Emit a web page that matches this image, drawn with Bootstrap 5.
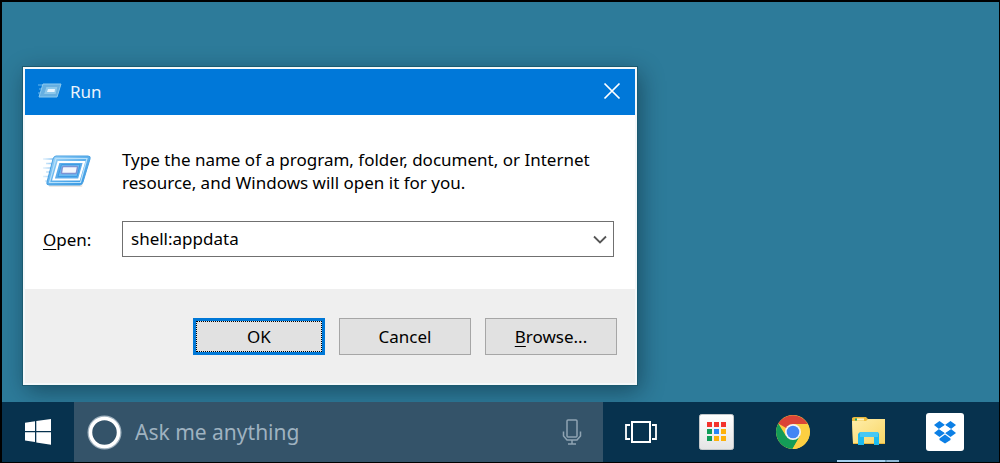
<!DOCTYPE html>
<html lang="en">
<head>
<meta charset="utf-8">
<meta name="viewport" content="width=device-width, initial-scale=1">
<title>Run</title>
<link href="https://cdn.jsdelivr.net/npm/bootstrap@5.3.0/dist/css/bootstrap.min.css" rel="stylesheet">
<style>
  body { font-family: "Noto Sans", "Open Sans", sans-serif; font-size: 17px; line-height: 23px; color: #000; background: #2d7b9a; }
  .desktop { border: 2px solid #000; border-right-width: 1px; }
  .workspace { padding: 65px 21px 17px; }
  .run-dialog { max-width: 614px; border: 2px solid #f4f8fa; background: #fff; outline: 1px solid #1b5a70; outline-offset: 0; box-shadow: 3px 6px 22px rgba(0, 20, 30, .45); }
  .title-strip { height: 46px; padding: 0 13px 2px; background: #0078d9; color: #fff; }
  .title-strip .caption { color: #eaf4fc; }
  .close-button { width: 20px; height: 20px; }
  .dialog-content { padding: 33px 21px 32px 18px; }
  .label-column { width: 79px; }
  .intro { margin-bottom: 27px; }
  .combo { height: 36px; border: 1px solid #707070; background: #fff; }
  .combo input { font-size: 17px; color: #000; padding: 0 8px 2px; outline: 0; }
  .combo button { width: 26px; }
  .dialog-actions { background: #efefef; padding: 29px 18px 28px; gap: 14px; }
  .action { width: 132px; height: 37px; border: 1px solid #a6a6a6; background: #e1e1e1; color: #000; font-size: 17px; line-height: 23px; padding: 0; }
  .action.default { border-color: #0078d7; border-width: 3px; outline: 1px dotted #000; outline-offset: -4px; }
  u { text-underline-offset: 3px; }
  .taskbar { height: 60px; background: #07324e; }
  .start-button { width: 72px; }
  .search-area { background: #345369; padding: 0 21px 0 13px; }
  .search-area input { color: #9fb2c0; font-size: 21px; line-height: 30px; padding: 0; margin-left: 13px; outline: 0; }
  .search-area input::placeholder { color: #9fb2c0; opacity: 1; }
  .task-icons { gap: 1px; padding-right: 17px; }
  .task-button { width: 75px; }
  .running::after { content: ""; position: absolute; left: 6px; right: 7px; bottom: 0; height: 2px; background: linear-gradient(90deg, #a5d0ef 78%, #6f9fbc 78%, #6f9fbc 81%, #8eb8d6 81%); }
  .plain { border: 0; padding: 0; background: transparent; }
  svg { display: block; flex: none; }
</style>
</head>
<body>
<svg width="0" height="0" class="position-absolute" aria-hidden="true">
  <defs>
    <linearGradient id="glass" x1="0" y1="0" x2="1" y2="1"><stop offset="0" stop-color="#a9dafa"/><stop offset=".5" stop-color="#5eb0ec"/><stop offset="1" stop-color="#3295e2"/></linearGradient>
    <linearGradient id="trail" gradientUnits="userSpaceOnUse" x1="0" x2="12" y1="0" y2="0"><stop offset="0" stop-color="#9fd0f5" stop-opacity=".3"/><stop offset="1" stop-color="#6db4ee"/></linearGradient>
    <linearGradient id="folder" x1="0" y1="0" x2="1" y2="1"><stop offset="0" stop-color="#ffeeaa"/><stop offset="1" stop-color="#f8d667"/></linearGradient>
    <linearGradient id="tile" x1="0" y1="0" x2="0" y2="1"><stop offset="0" stop-color="#fff"/><stop offset="1" stop-color="#e4e4e4"/></linearGradient>
  </defs>
</svg>
<div class="desktop d-flex flex-column min-vh-100">
  <main class="workspace flex-grow-1">
    <section class="run-dialog" role="dialog" aria-labelledby="run-title">
      <header class="title-strip d-flex align-items-center">
        <svg width="24" height="18" viewBox="0 0 24 18" aria-hidden="true">
          <path d="M0 3h6M1 7h5M0 11h5" stroke="#65b5ee"/>
          <path d="M5 2h18l-4 13H1z" fill="#64afe2" stroke="#8bcaf0"/>
          <path d="M8 4.500h12l-2 8H5.500z" fill="#8cc8eb" stroke="#68afe0"/>
          <path d="M10 7h7l-.5 3H9z" fill="#e8f5ff"/>
        </svg>
        <span id="run-title" class="caption ms-2">Run</span>
        <button class="plain close-button ms-auto d-flex align-items-center justify-content-center" type="button" aria-label="Close">
          <svg width="18" height="18" viewBox="0 0 18 18"><path d="M1.500 1.500l15 15M16.500 1.500l-15 15" stroke="#fff" stroke-width="1.700"/></svg>
        </button>
      </header>
      <form>
        <div class="dialog-content">
          <div class="intro d-flex">
            <div class="label-column flex-shrink-0">
              <svg width="49" height="46" viewBox="0 0 49 46" aria-hidden="true">
                <path d="M0 11h12M3 15.500h9M0 20h10M3 24h7M0 28.500h8M2 33h6" stroke="url(#trail)" stroke-width="1.500"/>
                <path d="M13 10h34l-8 29H6z" fill="#9b806a" opacity=".18"/>
                <path d="M13 8h32q3 0 2 3l-7 23q-1 3-3 3H6q-3 0-2-3l6-23q1-3 3-3z" fill="url(#glass)" stroke="#49a1e3"/>
                <path d="M13 10.500h31l-6.500 24H6.500z" fill="none" stroke="#b8e1fb" stroke-width="1.200"/>
                <path d="M15.500 14h25.500l-5 17.500H10.500z" fill="#5cacea" stroke="#fff" stroke-width="2.200"/>
                <path d="M18.500 16.500h18.500l-3 12H15z" fill="#6bb9f1" stroke="#3d9be4"/>
                <path d="M20.500 18.500h13q1.200 0 1 1l-1 5q-.3 1-1.500 1H19.500q-1.200 0-1-1l.8-5q.2-1 1.200-1z" fill="#f3f6fd" stroke="#7c93d4" stroke-width="1.500"/>
              </svg>
            </div>
            <div>Type the name of a program, folder, document, or Internet<br class="d-none d-sm-block"> resource, and Windows will open it for you.</div>
          </div>
          <div class="d-flex align-items-center">
            <label class="label-column flex-shrink-0" for="open-field"><u>O</u>pen:</label>
            <div class="combo d-flex flex-grow-1">
              <input class="border-0 flex-grow-1 bg-transparent w-100" id="open-field" type="text" value="shell:appdata">
              <button class="plain d-flex align-items-center justify-content-center flex-shrink-0" type="button" aria-label="Show recent commands">
                <svg width="14" height="9" viewBox="0 0 14 9"><path d="M1 1.500l6 6 6-6" fill="none" stroke="#555" stroke-width="1.800"/></svg>
              </button>
            </div>
          </div>
        </div>
        <div class="dialog-actions d-flex flex-wrap justify-content-end">
          <button class="btn rounded-0 action default" type="button">OK</button>
          <button class="btn rounded-0 action" type="button">Cancel</button>
          <button class="btn rounded-0 action" type="button"><u>B</u>rowse...</button>
        </div>
      </form>
    </section>
  </main>
  <footer class="taskbar d-flex">
    <button class="plain start-button d-flex align-items-center justify-content-center flex-shrink-0" type="button" aria-label="Start">
      <svg width="26" height="26" viewBox="0 0 26 26"><path fill="#fff" d="M0 3.800L10 2.300V12H0zM11.300 2.100L26 0v12H11.300zM0 13.300h10v9.600L0 21.500zM11.300 13.300H26v12.500l-14.700-2.300z"/></svg>
    </button>
    <div class="search-area d-flex align-items-center flex-grow-1">
      <svg width="35" height="35" viewBox="0 0 35 35" aria-hidden="true"><circle cx="17.500" cy="17.500" r="15.500" fill="none" stroke="#9fb1be" stroke-width="3"/><circle cx="17.500" cy="17.500" r="14" fill="none" stroke="#fff" stroke-width="3.500"/></svg>
      <input class="border-0 bg-transparent flex-grow-1 w-100" type="text" placeholder="Ask me anything" aria-label="Ask me anything">
      <button class="plain" type="button" aria-label="Voice search">
        <svg width="20" height="26" viewBox="0 0 20 26"><g fill="none" stroke="#8fa4b3" stroke-width="1.500"><rect x="5" y="1" width="10" height="17" rx="1"/><path d="M1.500 12.500V17l3.500 4h10l3.500-4v-4.500M10 21v4M6 25h8"/></g></svg>
      </button>
    </div>
    <nav class="task-icons d-flex flex-shrink-0" aria-label="Taskbar">
      <button class="plain task-button d-flex align-items-center justify-content-center" type="button" aria-label="Task View">
        <svg width="32" height="24" viewBox="0 0 32 24"><g fill="none" stroke="#fff" stroke-width="2"><rect x="7" y="2" width="18" height="20"/><path d="M5 5H1v14h4M27 5h4v14h-4" stroke-width="1.800"/></g></svg>
      </button>
      <button class="plain task-button d-flex align-items-center justify-content-center" type="button" aria-label="App Launcher">
        <svg width="35" height="36" viewBox="0 0 35 36"><rect x=".5" y=".5" width="34" height="35" rx="2" fill="url(#tile)" stroke="#c4c8ca"/><g fill="#f3322c"><path d="M8 8h5v5H8zM15 8h5v5h-5zM22 8h5v5h-5z"/></g><path d="M8 15h5v5H8zM8 22h5v5H8z" fill="#109d58"/><path d="M15 15h5v5h-5z" fill="#2485f5"/><path d="M22 15h5v5h-5zM15 22h5v5h-5zM22 22h5v5h-5z" fill="#fdb10b"/></svg>
      </button>
      <button class="plain task-button d-flex align-items-center justify-content-center" type="button" aria-label="Chrome">
        <svg width="34" height="34" viewBox="0 0 34 34"><circle cx="17" cy="17" r="17" fill="#fccf42"/><path d="M17 17L2.300 8.500A17 17 0 0 1 31.700 9H17z" fill="#db4437"/><path d="M2.300 8.500A17 17 0 0 0 16.500 34L24 21l-7-4-7 4z" fill="#149c57"/><path d="M17 9h14.700A17 17 0 0 1 16.500 34L24 21z" fill="#fccf42"/><circle cx="17" cy="17" r="8" fill="#f4f4f4"/><circle cx="17" cy="17" r="6.300" fill="#4285f4"/></svg>
      </button>
      <button class="plain task-button running position-relative d-flex align-items-center justify-content-center" type="button" aria-label="File Explorer">
        <svg width="34" height="30" viewBox="0 0 34 30"><path d="M0 2q0-2 2-2h12l2 2h17v25H1z" fill="#e9b93f"/><path d="M0 4h14l2-2h17v24H1z" fill="url(#folder)"/><path d="M0 1h14v3H1z" fill="#f0bf3d"/><path d="M3 1.500h2v2H3z" fill="#20a66a"/><path d="M5 1.500h7v2H5z" fill="#fff4c2"/><path d="M6 17l2-2h18l1 2v11h-5v-8H12v8H6z" fill="#1cbaf0"/><path d="M8 15h18v5H8z" fill="#48c8f3"/></svg>
      </button>
      <button class="plain task-button d-flex align-items-center justify-content-center" type="button" aria-label="Dropbox">
        <svg width="38" height="38" viewBox="0 0 38 38"><rect width="38" height="38" rx="3" fill="#fff"/><path fill="#0c7fe5" d="M13.500 8l5.500 4-6 4-5-4zM24.500 8l5.500 4-5 4-6-4zM13 16l6 4-5.500 4-5.500-4zM25 16l5 4-5.500 4-5.500-4zM19 21.500l5.500 4v1.500L19 30.500 13.500 27v-1.500z"/><path d="M19 12l6 4-6 4-6-4z" fill="#fff"/></svg>
      </button>
    </nav>
  </footer>
</div>
<script src="https://cdn.jsdelivr.net/npm/bootstrap@5.3.0/dist/js/bootstrap.bundle.min.js"></script>
</body>
</html>
